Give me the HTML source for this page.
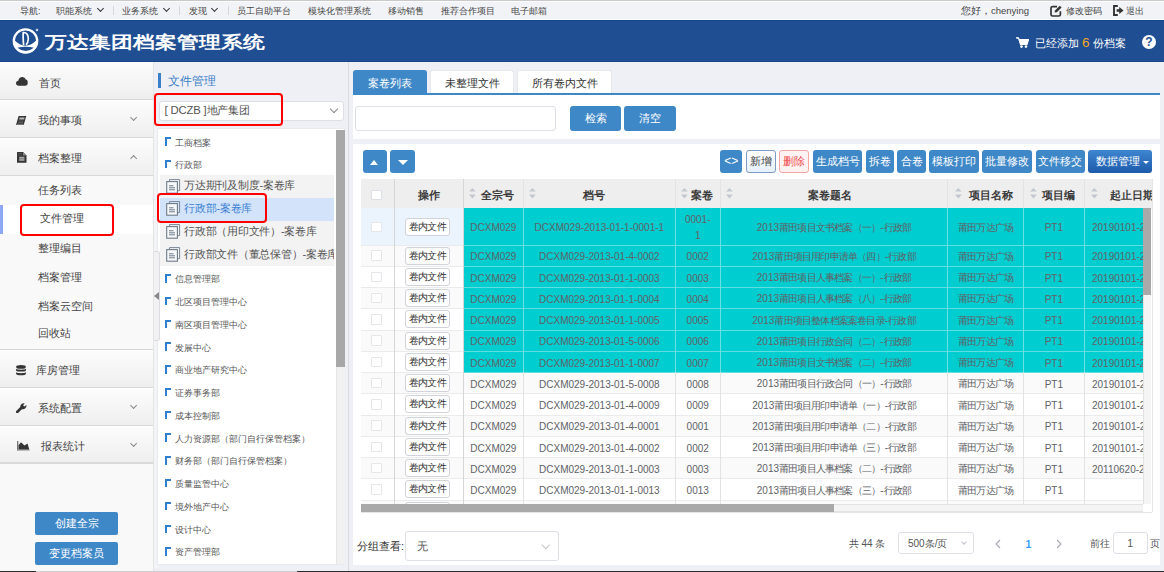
<!DOCTYPE html>
<html><head><meta charset="utf-8">
<style>
*{box-sizing:border-box;margin:0;padding:0}
html,body{width:1164px;height:572px;overflow:hidden;background:#f1f2f6;font-family:"Liberation Sans",sans-serif;color:#333}
.a{position:absolute;white-space:nowrap}
.t{position:absolute;white-space:nowrap;line-height:1}
/* top bar */
#top{position:absolute;left:0;top:0;width:1164px;height:20px;background:#f2f3f7;border-top:1px solid #c9c9c9;box-shadow:inset 0 1px 0 #fbfbfd,inset 0 -1px 0 #fff}
#top .t{font-size:8.8px;color:#444;top:5.6px}
.chev{position:absolute;width:5px;height:5px;border:0 solid #333;border-width:0 1.5px 1.5px 0;transform:rotate(45deg)}
.sep{position:absolute;top:4.8px;width:1.4px;height:9px;background:#d6d7db}
/* header */
#hdr{position:absolute;left:0;top:20px;width:1164px;height:41.8px;background:#1f4e92;border-top:1px solid #1a4788;border-bottom:1.5px solid #1a4788;z-index:2}
/* sidebar */
#side{position:absolute;left:0;top:61px;width:154px;height:511px;background:#f9f9f9;border-right:1px solid #e4e4e4}
.mi{position:absolute;left:0;width:153px;background:linear-gradient(#fcfcfc,#efefef);border-bottom:1px solid #d8d8d8;border-top:1px solid #fff}
.mi .t{font-size:11px;color:#444}
.sub{position:absolute;left:0;width:153px;background:#f9f9f9;border-bottom:1px solid #d8d8d8}
.sub .t{font-size:11px;color:#444;left:38px}
.sbtn{position:absolute;left:35px;width:83px;height:23px;background:#3f88c8;border-radius:2px;color:#fff;font-size:11px;text-align:center;line-height:23px}
.red{position:absolute;border:2.5px solid #ff0000;border-radius:4px}

#tree{position:absolute;left:154px;top:61px;width:195px;height:511px;background:#eef0f5;border-right:1px solid #d9dbe0}
#tree .t{font-size:9px;color:#555}
.gi{position:absolute;left:10.6px;width:6px;height:8.5px;border-left:2.2px solid #2f7fd0;border-top:2.1px solid #2f7fd0}
.doc{position:absolute;left:12.5px}
.l2{font-size:11px !important;color:#555 !important;left:30px}
/*MCSS*/
#main{position:absolute;left:349px;top:61px;width:815px;height:511px;background:#eef0f5}
.tab{position:absolute;top:8.8px;height:24.2px;background:#fff;border:1px solid #e6e8ec;border-bottom:none;border-radius:3px 3px 0 0;font-size:11px;color:#333;text-align:center;line-height:24px}
.bb{position:absolute;height:23px;border-radius:3px;background:#3f88c8;color:#fff;font-size:10.5px;text-align:center;line-height:23px}
.th{position:absolute;top:11.2px;line-height:1;font-size:10.8px;font-weight:bold;color:#3a3a3a}
.srt{position:absolute;width:7px;height:12px}
.cell{position:absolute;text-align:center;font-size:10px;color:#606266;line-height:1}
.vb{position:absolute;top:0;width:1px;background:#e6e6e6}
.ck{position:absolute;width:10.5px;height:10.5px;background:#fff;border:1px solid #dcdfe6;border-radius:1px}
.jb{position:absolute;width:45px;height:18px;background:#fff;border:1px solid #d0d3d9;border-radius:3px;font-size:10px;letter-spacing:-0.8px;text-indent:0.8px;color:#333;text-align:center;line-height:16.5px}
/*/MCSS*/</style></head><body>

<div id="top">
  <div class="t" style="left:20px">导航:</div>
  <div class="t" style="left:56px">职能系统</div><div class="chev" style="left:98px;top:5px"></div>
  <div class="sep" style="left:113px"></div>
  <div class="t" style="left:122px">业务系统</div><div class="chev" style="left:164px;top:5px"></div>
  <div class="sep" style="left:179px"></div>
  <div class="t" style="left:189px">发现</div><div class="chev" style="left:212px;top:5px"></div>
  <div class="sep" style="left:228px"></div>
  <div class="t" style="left:237px">员工自助平台</div>
  <div class="t" style="left:308px">模块化管理系统</div>
  <div class="t" style="left:388px">移动销售</div>
  <div class="t" style="left:441px">推荐合作项目</div>
  <div class="t" style="left:511px">电子邮箱</div>
  <div class="t" style="left:961px;font-size:9.5px;top:5.3px">您好，chenying</div>
  <svg class="a" style="left:1049.5px;top:3.8px" width="12" height="12" viewBox="0 0 12 12"><path d="M7 1.6 H2.6 Q1 1.6 1 3.2 V9.4 Q1 11 2.6 11 H8.8 Q10.4 11 10.4 9.4 V6.2" fill="none" stroke="#333" stroke-width="1.7"/><path d="M4.6 7.6 L5 5.5 L9.8 0.7 L11.6 2.5 L6.8 7.2 Z" fill="#333"/></svg>
  <div class="t" style="left:1065.5px">修改密码</div>
  <svg class="a" style="left:1112.8px;top:4.2px" width="11" height="11" viewBox="0 0 11 11"><path d="M4.8 1 H1 V10 H4.8" fill="none" stroke="#333" stroke-width="1.9"/><path d="M3.6 4.3 H6.2 V2 L10.6 5.5 L6.2 9 V6.7 H3.6 Z" fill="#333"/></svg>
  <div class="t" style="left:1125.7px">退出</div>
</div>

<div id="hdr">
  <svg class="a" style="left:8px;top:5px" width="36" height="32" viewBox="0 0 36 32">
    <path d="M5.8 13.5 Q17.5 26 29.2 13.5 L29.2 15.5 A11.7 11.7 0 0 1 5.8 15.5 Z" fill="#fff"/>
    <path d="M9.2 21.8 Q17.5 19.5 26.3 21.8 Q17.5 28 9.2 21.8 Z" fill="#1f4e92"/>
    <circle cx="17.5" cy="15" r="11.7" fill="none" stroke="#fff" stroke-width="2.3"/>
    <path d="M15.6 19 C15.2 14 15 9 15.2 6.5 C18.8 6.2 20.4 9.5 20.3 13 C20.1 16 19.3 17.8 18.1 19" fill="none" stroke="#fff" stroke-width="1.7"/>
    <circle cx="29" cy="4" r="1.3" fill="#c5d2e6"/>
  </svg>
  <div class="t" style="left:45px;top:11px;font-size:22px;font-weight:bold;color:#fff;letter-spacing:0;transform:scaleY(0.78);transform-origin:0 11px">万达集团档案管理系统</div>
  <svg class="a" style="left:1016px;top:16px" width="13" height="11" viewBox="0 0 13 11">
    <path d="M0 0.8 H2.5 L4.5 7.5 H11 L12.5 2.5 H3.5" fill="#fff" stroke="#fff" stroke-width="1.2" stroke-linejoin="round"/>
    <circle cx="5.5" cy="9.6" r="1.3" fill="#fff"/><circle cx="10" cy="9.6" r="1.3" fill="#fff"/>
  </svg>
  <div class="t" style="left:1035px;top:15px;font-size:11px;color:#fff">已经添加 <span style="color:#f5a623;font-size:13.5px">6</span> 份档案</div>
  <div class="a" style="left:1142px;top:14px;width:14px;height:14px;border-radius:50%;background:#fff;color:#1f4e92;font-size:12px;font-weight:bold;text-align:center;line-height:14px">?</div>
</div>

<div id="side">
<div class="mi" style="top:0.0px;height:39.0px"><svg class="a" style="left:15.8px;top:15.2px" width="12" height="9" viewBox="0 0 12 9"><path d="M2.8 8.7 C1 8.7 0 7.6 0 6.2 C0 4.9 1 3.9 2.3 3.8 C2.6 1.6 4.3 0 6.3 0 C7.9 0 9.2 1 9.7 2.4 C10.9 2.5 11.7 3.5 11.7 4.8 C11.7 5.1 11.7 5.3 11.6 5.5 C11.7 5.7 11.7 6 11.7 6.3 C11.7 7.6 10.7 8.7 9.4 8.7 Z" fill="#353535"/></svg><div class="t" style="left:38.8px;top:15.5px">首页</div></div>
<div class="mi" style="top:39.0px;height:38.0px"><svg class="a" style="left:16.1px;top:14.7px" width="11" height="10" viewBox="0 0 11 10"><path d="M2.6 0 H10.3 L7.7 9.1 H0 Z" fill="#353535"/><path d="M3.6 1.6 H8.6 L8.1 3.4 H3.1 Z" fill="#b5b5b5"/><path d="M2.6 5 H7.4 M2.2 6.5 H7" stroke="#777" stroke-width="0.6"/><path d="M0.6 8.3 H7.5" stroke="#aaa" stroke-width="0.7"/></svg><div class="t" style="left:37.7px;top:14.2px">我的事项</div><div class="chev" style="left:130.8px;top:14.3px;width:5.2px;height:5.2px;border-color:#8a8a8a;border-width:0 1px 1px 0"></div></div>
<div class="mi" style="top:77.0px;height:38.0px"><svg class="a" style="left:16.6px;top:13.2px" width="10" height="11" viewBox="0 0 10 11"><path d="M0 0 H6 L9.5 3.5 V10.8 H0 Z" fill="#353535"/><path d="M6 0 V3.5 H9.5" fill="#888"/><rect x="2.2" y="4.8" width="5.2" height="4" fill="#aaa"/><path d="M2.2 6.8 H7.4" stroke="#555" stroke-width="0.6"/><path d="M1 1.5 H5 M1 3 H5" stroke="#666" stroke-width="0.5"/></svg><div class="t" style="left:37.7px;top:14.0px">档案整理</div><div class="chev" style="left:130.8px;top:17.3px;width:5.2px;height:5.2px;border-color:#8a8a8a;border-width:1px 0 0 1px"></div></div>
<div class="sub" style="top:115.0px;height:174px">
<div class="a" style="left:0;top:28.6px;width:153px;height:29.8px;background:#fff"></div>
<div class="a" style="left:0;top:28.6px;width:2.5px;height:29.8px;background:#8ea8f6"></div>
<div class="t" style="left:38.4px;top:9.0px">任务列表</div>
<div class="t" style="left:40.3px;top:37.3px">文件管理</div>
<div class="t" style="left:38.4px;top:66.5px">整理编目</div>
<div class="t" style="left:38.4px;top:95.5px">档案管理</div>
<div class="t" style="left:38.4px;top:124.5px">档案云空间</div>
<div class="t" style="left:38.4px;top:152.2px">回收站</div>
</div>
<div class="mi" style="top:289.0px;height:38.0px"><svg class="a" style="left:15.8px;top:13.6px" width="10" height="11" viewBox="0 0 10 11"><ellipse cx="5" cy="1.9" rx="4.9" ry="1.9" fill="#353535"/><path d="M0.1 3.6 C0.1 5.2 9.9 5.2 9.9 3.6 V5.4 C9.9 7 0.1 7 0.1 5.4 Z M0.1 7 C0.1 8.6 9.9 8.6 9.9 7 V8.8 C9.9 10.8 0.1 10.8 0.1 8.8 Z" fill="#353535"/></svg><div class="t" style="left:36px;top:14.0px">库房管理</div></div>
<div class="mi" style="top:327.0px;height:38.0px"><svg class="a" style="left:16.3px;top:13.8px" width="11" height="10" viewBox="0 0 11 10"><path d="M1.2 9 L5.2 5" stroke="#353535" stroke-width="2.6" stroke-linecap="round"/><path d="M4.3 4.3 A3.6 3.6 0 0 1 8.8 0.3 L7.1 2.3 L8.3 3.6 L10.4 2 A3.6 3.6 0 0 1 5.9 6.2 Z" fill="#353535"/></svg><div class="t" style="left:37.5px;top:14.2px">系统配置</div><div class="chev" style="left:130.8px;top:14.3px;width:5.2px;height:5.2px;border-color:#8a8a8a;border-width:0 1px 1px 0"></div></div>
<div class="mi" style="border-bottom:2px solid #dadada;top:365.0px;height:38.0px"><svg class="a" style="left:16.5px;top:14.1px" width="13" height="10" viewBox="0 0 13 10"><path d="M0.7 0 V9.5" stroke="#666" stroke-width="1.2"/><path d="M0 9 H12.5" stroke="#999" stroke-width="1.2"/><path d="M1.5 8.4 V4.2 L4 1.2 L7.5 4.6 L10.5 2.4 L12.3 8.4 Z" fill="#353535"/></svg><div class="t" style="left:40.5px;top:13.5px">报表统计</div><div class="chev" style="left:130.8px;top:13.6px;width:5.2px;height:5.2px;border-color:#8a8a8a;border-width:0 1px 1px 0"></div></div>
<div class="sbtn" style="top:450.9px;height:22.9px;line-height:22.9px">创建全宗</div>
<div class="sbtn" style="top:481.3px;height:22.9px;line-height:22.9px">变更档案员</div>
<div class="red" style="left:20.3px;top:142.7px;width:94px;height:32.4px"></div>
</div>
<div id="tree">
<div class="a" style="left:4.0px;top:12.0px;width:2.9px;height:15px;background:#3a7fc8"></div>
<div class="t" style="left:14.0px;top:13.5px;font-size:12.2px;color:#3d7fc6">文件管理</div>
<div class="a" style="left:4.5px;top:39.6px;width:185.5px;height:20.6px;background:#fff;border:1px solid #dcdfe6;border-radius:3px"></div>
<div class="t" style="left:10.5px;top:44.3px;font-size:11.3px;color:#555;letter-spacing:-0.15px">[ DCZB ]地产集团</div>
<div class="chev" style="left:177.3px;top:44.8px;width:6px;height:6px;border-color:#888;border-width:0 1px 1px 0"></div>
<div class="a" style="left:0;top:61.0px;width:4px;height:446px;background:#f3f4f8"></div>
<div class="a" style="left:3.4px;top:66.6px;width:188px;height:437px;background:#fff;border:1px solid #e8eaee"></div>
<div class="a" style="left:182.0px;top:69.0px;width:9px;height:434px;background:#f1f1f1;border-left:1px solid #e6e6e6"></div>
<div class="a" style="left:182.4px;top:69.0px;width:8.6px;height:236.6px;background:#a8a8a8"></div>
<div class="gi" style="left:10.6px;top:76.4px"></div>
<div class="t" style="left:21.3px;top:77.5px">工商档案</div>
<div class="gi" style="left:10.6px;top:98.5px"></div>
<div class="t" style="left:21.3px;top:99.6px">行政部</div>
<div class="a" style="left:6.0px;top:114.2px;width:174px;height:90.4px;background:#f3f3f3;overflow:hidden">
<div class="a" style="left:0;top:22.5px;width:174px;height:23.1px;background:#d3e4fa"></div>
<svg class="a" style="left:6.4px;top:3.4px" width="15" height="15" viewBox="0 0 15 15"><path d="M3.5 2.3 V0.6 H13.6 V11.6 H11.6" fill="none" stroke="#7a8794" stroke-width="1"/><rect x="0.7" y="2.6" width="10.7" height="11.6" fill="#f6f8fa" stroke="#6f7c89" stroke-width="1.1"/><path d="M3 6.8 H7.5 M3 8.8 H9 M3 10.8 H9" stroke="#6f7c89" stroke-width="1"/></svg>
<div class="t" style="left:24.2px;top:5.0px;font-size:11px;letter-spacing:-0.25px;color:#555">万达期刊及制度-案卷库</div>
<svg class="a" style="left:6.4px;top:26.2px" width="15" height="15" viewBox="0 0 15 15"><path d="M3.5 2.3 V0.6 H13.6 V11.6 H11.6" fill="none" stroke="#7a8794" stroke-width="1"/><rect x="0.7" y="2.6" width="10.7" height="11.6" fill="#f6f8fa" stroke="#6f7c89" stroke-width="1.1"/><path d="M3 6.8 H7.5 M3 8.8 H9 M3 10.8 H9" stroke="#6f7c89" stroke-width="1"/></svg>
<div class="t" style="left:24.2px;top:27.8px;font-size:11px;letter-spacing:-0.25px;color:#555;color:#3d80d2">行政部-案卷库</div>
<svg class="a" style="left:6.4px;top:49.1px" width="15" height="15" viewBox="0 0 15 15"><path d="M3.5 2.3 V0.6 H13.6 V11.6 H11.6" fill="none" stroke="#7a8794" stroke-width="1"/><rect x="0.7" y="2.6" width="10.7" height="11.6" fill="#f6f8fa" stroke="#6f7c89" stroke-width="1.1"/><path d="M3 6.8 H7.5 M3 8.8 H9 M3 10.8 H9" stroke="#6f7c89" stroke-width="1"/></svg>
<div class="t" style="left:24.2px;top:50.7px;font-size:11px;letter-spacing:-0.25px;color:#555">行政部（用印文件）-案卷库</div>
<svg class="a" style="left:6.4px;top:71.9px" width="15" height="15" viewBox="0 0 15 15"><path d="M3.5 2.3 V0.6 H13.6 V11.6 H11.6" fill="none" stroke="#7a8794" stroke-width="1"/><rect x="0.7" y="2.6" width="10.7" height="11.6" fill="#f6f8fa" stroke="#6f7c89" stroke-width="1.1"/><path d="M3 6.8 H7.5 M3 8.8 H9 M3 10.8 H9" stroke="#6f7c89" stroke-width="1"/></svg>
<div class="t" style="left:24.2px;top:73.5px;font-size:11px;letter-spacing:-0.25px;color:#555">行政部文件（董总保管）-案卷库</div>
</div>
<div class="gi" style="left:10.6px;top:213.2px"></div>
<div class="t" style="left:21.3px;top:214.3px">信息管理部</div>
<div class="gi" style="left:10.6px;top:235.9px"></div>
<div class="t" style="left:21.3px;top:237.1px">北区项目管理中心</div>
<div class="gi" style="left:10.6px;top:258.7px"></div>
<div class="t" style="left:21.3px;top:259.8px">南区项目管理中心</div>
<div class="gi" style="left:10.6px;top:281.4px"></div>
<div class="t" style="left:21.3px;top:282.6px">发展中心</div>
<div class="gi" style="left:10.6px;top:304.2px"></div>
<div class="t" style="left:21.3px;top:305.3px">商业地产研究中心</div>
<div class="gi" style="left:10.6px;top:326.9px"></div>
<div class="t" style="left:21.3px;top:328.1px">证券事务部</div>
<div class="gi" style="left:10.6px;top:349.7px"></div>
<div class="t" style="left:21.3px;top:350.8px">成本控制部</div>
<div class="gi" style="left:10.6px;top:372.4px"></div>
<div class="t" style="left:21.3px;top:373.6px">人力资源部（部门自行保管档案）</div>
<div class="gi" style="left:10.6px;top:395.2px"></div>
<div class="t" style="left:21.3px;top:396.3px">财务部（部门自行保管档案）</div>
<div class="gi" style="left:10.6px;top:417.9px"></div>
<div class="t" style="left:21.3px;top:419.1px">质量监管中心</div>
<div class="gi" style="left:10.6px;top:440.7px"></div>
<div class="t" style="left:21.3px;top:441.8px">境外地产中心</div>
<div class="gi" style="left:10.6px;top:463.5px"></div>
<div class="t" style="left:21.3px;top:464.5px">设计中心</div>
<div class="gi" style="left:10.6px;top:486.2px"></div>
<div class="t" style="left:21.3px;top:487.3px">资产管理部</div>
<div class="red" style="left:0.4px;top:31.5px;width:129.1px;height:33.3px"></div>
<div class="red" style="left:3.0px;top:132.4px;width:109.6px;height:30px"></div>
</div>
<div class="a" style="left:153.5px;top:251.2px;width:6.5px;height:90px;background:#f1f1f3;border:1px solid #dcdde2;border-left:none;border-radius:0 3px 3px 0"></div>
<div class="a" style="left:154.4px;top:292px;width:0;height:0;border-top:4.6px solid transparent;border-bottom:4.6px solid transparent;border-right:5px solid #888"></div>
<div id="main">
<div class="tab" style="left:4.4px;width:73.7px;background:#3f88c8;border-color:#3f88c8;color:#fff">案卷列表</div>
<div class="tab" style="left:81.2px;width:84.3px">未整理文件</div>
<div class="tab" style="left:168.3px;width:95.1px">所有卷内文件</div>
<div class="a" style="left:4.4px;top:32.3px;width:807px;height:1.7px;background:#3f88c8"></div>
<div class="a" style="left:4.0px;top:34.0px;width:807px;height:44px;background:#fff"></div>
<div class="a" style="left:6.0px;top:45.0px;width:201px;height:25px;background:#fff;border:1px solid #dcdfe6;border-radius:3px"></div>
<div class="bb" style="left:221.0px;top:44.5px;width:51px;height:25.5px;line-height:25.5px;font-size:11px">检索</div>
<div class="bb" style="left:275.4px;top:44.5px;width:51.6px;height:25.5px;line-height:25.5px;font-size:11px">清空</div>
<div class="a" style="left:4.0px;top:83.0px;width:807px;height:421px;background:#fff"></div>
<div class="bb" style="left:13.7px;top:89.0px;width:24.5px;height:22.8px"></div>
<div class="a" style="left:21.0px;top:99.0px;width:0;height:0;border-left:4.7px solid transparent;border-right:4.7px solid transparent;border-bottom:5.2px solid #fff"></div>
<div class="bb" style="left:41.4px;top:89.0px;width:24.7px;height:22.8px"></div>
<div class="a" style="left:48.6px;top:99.0px;width:0;height:0;border-left:5px solid transparent;border-right:5px solid transparent;border-top:5.2px solid #fff"></div>
<div class="bb" style="left:370.8px;top:89.0px;width:22.7px;height:22.5px"><span style="font-size:12px">&lt;&gt;</span></div>
<div class="bb" style="left:396.7px;top:89.0px;width:30.2px;height:22.5px;background:linear-gradient(#fff,#e6f0fb);border:1px solid #7d9cc4;color:#444;line-height:21px">新增</div>
<div class="bb" style="left:430.0px;top:89.0px;width:30.4px;height:22.5px;background:#fff2f2;border:1px solid #f6a5a5;color:#f04848;line-height:21px">删除</div>
<div class="bb" style="left:463.8px;top:89.0px;width:49.7px;height:22.5px">生成档号</div>
<div class="bb" style="left:517.0px;top:89.0px;width:27.7px;height:22.5px">拆卷</div>
<div class="bb" style="left:548.3px;top:89.0px;width:28.5px;height:22.5px">合卷</div>
<div class="bb" style="left:580.4px;top:89.0px;width:49.3px;height:22.5px">模板打印</div>
<div class="bb" style="left:633.3px;top:89.0px;width:49.9px;height:22.5px">批量修改</div>
<div class="bb" style="left:686.7px;top:89.0px;width:49.3px;height:22.5px">文件移交</div>
<div class="bb" style="left:739.3px;top:89.0px;width:64px;height:22.5px;background:linear-gradient(#3e86cf,#1c5aab);text-align:left;padding-left:8px;font-size:11px">数据管理</div>
<div class="a" style="left:794.0px;top:99.5px;width:0;height:0;border-left:3.2px solid transparent;border-right:3.2px solid transparent;border-top:3.5px solid #fff"></div>
<div class="a" style="left:12.2px;top:118.2px;width:790.4px;height:333px;overflow:hidden;background:#fff">
<div class="a" style="left:0;top:0;width:790.4px;height:29.4px;background:#eeeeee"></div>
<div class="a" style="left:0;top:29.20px;width:782.3px;height:36.70px;background:#ebf3fd"></div>
<div class="a" style="left:102.1px;top:29.20px;width:680.2px;height:36.70px;background:#00cdd0"></div>
<div class="a" style="left:0;top:65.90px;width:782.3px;height:21.24px;background:#fafafa"></div>
<div class="a" style="left:102.1px;top:65.90px;width:680.2px;height:21.24px;background:#00cdd0"></div>
<div class="a" style="left:0;top:87.14px;width:782.3px;height:21.24px;background:#fff"></div>
<div class="a" style="left:102.1px;top:87.14px;width:680.2px;height:21.24px;background:#00cdd0"></div>
<div class="a" style="left:0;top:108.38px;width:782.3px;height:21.24px;background:#fafafa"></div>
<div class="a" style="left:102.1px;top:108.38px;width:680.2px;height:21.24px;background:#00cdd0"></div>
<div class="a" style="left:0;top:129.62px;width:782.3px;height:21.24px;background:#fff"></div>
<div class="a" style="left:102.1px;top:129.62px;width:680.2px;height:21.24px;background:#00cdd0"></div>
<div class="a" style="left:0;top:150.86px;width:782.3px;height:21.24px;background:#fafafa"></div>
<div class="a" style="left:102.1px;top:150.86px;width:680.2px;height:21.24px;background:#00cdd0"></div>
<div class="a" style="left:0;top:172.10px;width:782.3px;height:21.24px;background:#fff"></div>
<div class="a" style="left:102.1px;top:172.10px;width:680.2px;height:21.24px;background:#00cdd0"></div>
<div class="a" style="left:0;top:193.34px;width:782.3px;height:21.24px;background:#fafafa"></div>
<div class="a" style="left:0;top:214.58px;width:782.3px;height:21.24px;background:#fff"></div>
<div class="a" style="left:0;top:235.82px;width:782.3px;height:21.24px;background:#fafafa"></div>
<div class="a" style="left:0;top:257.06px;width:782.3px;height:21.24px;background:#fff"></div>
<div class="a" style="left:0;top:278.30px;width:782.3px;height:21.24px;background:#fafafa"></div>
<div class="a" style="left:0;top:299.54px;width:782.3px;height:21.24px;background:#fff"></div>
<div class="a" style="left:0;top:320.78px;width:782.3px;height:21.24px;background:#fafafa"></div>
<div class="a" style="left:0;top:65.50px;width:782.3px;height:1px;background:#ebebeb"></div>
<div class="a" style="left:102.1px;top:65.50px;width:680.2px;height:1px;background:#5fdde0"></div>
<div class="a" style="left:0;top:86.74px;width:782.3px;height:1px;background:#ebebeb"></div>
<div class="a" style="left:102.1px;top:86.74px;width:680.2px;height:1px;background:#5fdde0"></div>
<div class="a" style="left:0;top:107.98px;width:782.3px;height:1px;background:#ebebeb"></div>
<div class="a" style="left:102.1px;top:107.98px;width:680.2px;height:1px;background:#5fdde0"></div>
<div class="a" style="left:0;top:129.22px;width:782.3px;height:1px;background:#ebebeb"></div>
<div class="a" style="left:102.1px;top:129.22px;width:680.2px;height:1px;background:#5fdde0"></div>
<div class="a" style="left:0;top:150.46px;width:782.3px;height:1px;background:#ebebeb"></div>
<div class="a" style="left:102.1px;top:150.46px;width:680.2px;height:1px;background:#5fdde0"></div>
<div class="a" style="left:0;top:171.70px;width:782.3px;height:1px;background:#ebebeb"></div>
<div class="a" style="left:102.1px;top:171.70px;width:680.2px;height:1px;background:#5fdde0"></div>
<div class="a" style="left:0;top:192.94px;width:782.3px;height:1px;background:#ebebeb"></div>
<div class="a" style="left:102.1px;top:192.94px;width:680.2px;height:1px;background:#5fdde0"></div>
<div class="a" style="left:0;top:214.18px;width:782.3px;height:1px;background:#ebebeb"></div>
<div class="a" style="left:0;top:235.42px;width:782.3px;height:1px;background:#ebebeb"></div>
<div class="a" style="left:0;top:256.66px;width:782.3px;height:1px;background:#ebebeb"></div>
<div class="a" style="left:0;top:277.90px;width:782.3px;height:1px;background:#ebebeb"></div>
<div class="a" style="left:0;top:299.14px;width:782.3px;height:1px;background:#ebebeb"></div>
<div class="a" style="left:0;top:320.38px;width:782.3px;height:1px;background:#ebebeb"></div>
<div class="a" style="left:0;top:341.62px;width:782.3px;height:1px;background:#ebebeb"></div>
<div class="vb" style="left:32.8px;height:324.4px;width:1.5px;background:#d6d6d6"></div>
<div class="vb" style="left:101.6px;height:324.4px;width:1.5px;background:#d6d6d6"></div>
<div class="vb" style="left:161.8px;height:324.4px;width:1px;background:#e3e3e3"></div>
<div class="vb" style="left:313.5px;height:324.4px;width:1px;background:#e3e3e3"></div>
<div class="vb" style="left:358.6px;height:324.4px;width:1px;background:#e3e3e3"></div>
<div class="vb" style="left:586.0px;height:324.4px;width:1px;background:#e3e3e3"></div>
<div class="vb" style="left:661.8px;height:324.4px;width:1px;background:#e3e3e3"></div>
<div class="vb" style="left:722.5px;height:324.4px;width:1px;background:#e3e3e3"></div>
<div class="vb" style="left:161.8px;top:29.2px;height:164.1px;background:#6adfe2"></div>
<div class="vb" style="left:313.5px;top:29.2px;height:164.1px;background:#6adfe2"></div>
<div class="vb" style="left:358.6px;top:29.2px;height:164.1px;background:#6adfe2"></div>
<div class="vb" style="left:586.0px;top:29.2px;height:164.1px;background:#6adfe2"></div>
<div class="vb" style="left:661.8px;top:29.2px;height:164.1px;background:#6adfe2"></div>
<div class="vb" style="left:722.5px;top:29.2px;height:164.1px;background:#6adfe2"></div>
<div class="ck" style="left:10.3px;top:10.4px"></div>
<div class="th" style="left:57.3px">操作</div>
<svg class="a" style="left:107.8px;top:9.2px" width="7" height="11" viewBox="0 0 7 11"><path d="M0 3.6 L3.4 0 L6.8 3.6 Z M0 6.6 L6.8 6.6 L3.4 10.5 Z" fill="#c3c7ce"/></svg>
<div class="th" style="left:120.2px">全宗号</div>
<svg class="a" style="left:168.0px;top:9.2px" width="7" height="11" viewBox="0 0 7 11"><path d="M0 3.6 L3.4 0 L6.8 3.6 Z M0 6.6 L6.8 6.6 L3.4 10.5 Z" fill="#c3c7ce"/></svg>
<div class="th" style="left:222.1px">档号</div>
<svg class="a" style="left:319.8px;top:9.2px" width="7" height="11" viewBox="0 0 7 11"><path d="M0 3.6 L3.4 0 L6.8 3.6 Z M0 6.6 L6.8 6.6 L3.4 10.5 Z" fill="#c3c7ce"/></svg>
<div class="th" style="left:329.8px">案卷</div>
<svg class="a" style="left:364.8px;top:9.2px" width="7" height="11" viewBox="0 0 7 11"><path d="M0 3.6 L3.4 0 L6.8 3.6 Z M0 6.6 L6.8 6.6 L3.4 10.5 Z" fill="#c3c7ce"/></svg>
<div class="th" style="left:446.6px">案卷题名</div>
<svg class="a" style="left:593.5px;top:9.2px" width="7" height="11" viewBox="0 0 7 11"><path d="M0 3.6 L3.4 0 L6.8 3.6 Z M0 6.6 L6.8 6.6 L3.4 10.5 Z" fill="#c3c7ce"/></svg>
<div class="th" style="left:607.5px">项目名称</div>
<svg class="a" style="left:668.8px;top:9.2px" width="7" height="11" viewBox="0 0 7 11"><path d="M0 3.6 L3.4 0 L6.8 3.6 Z M0 6.6 L6.8 6.6 L3.4 10.5 Z" fill="#c3c7ce"/></svg>
<div class="th" style="left:680.8px">项目编</div>
<svg class="a" style="left:729.8px;top:9.2px" width="7" height="11" viewBox="0 0 7 11"><path d="M0 3.6 L3.4 0 L6.8 3.6 Z M0 6.6 L6.8 6.6 L3.4 10.5 Z" fill="#c3c7ce"/></svg>
<div class="th" style="left:749.1px">起止日期</div>
<div class="ck" style="left:10.3px;top:42.4px;border-color:#e4e6ea"></div>
<div class="jb" style="left:43.4px;top:38.6px">卷内文件</div>
<div class="cell" style="left:102.1px;width:60.2px;top:44.2px">DCXM029</div>
<div class="cell" style="left:162.3px;width:151.7px;top:44.2px">DCXM029-2013-01-1-0001-1</div>
<div class="cell" style="left:314.0px;width:45px;top:32.8px;line-height:16.5px">0001-<br>1</div>
<div class="cell" style="left:359.1px;width:227.4px;top:43.8px;font-size:10px">2013<span style="letter-spacing:-0.8px">莆田项目文书档案（一）<span style="letter-spacing:0">-</span>行政部</span></div>
<div class="cell" style="left:586.5px;width:75.8px;top:43.8px;font-size:10px;letter-spacing:-0.8px">莆田万达广场</div>
<div class="cell" style="left:662.3px;width:60.7px;top:44.2px">PT1</div>
<div class="cell" style="left:730.8px;top:44.2px;text-align:left">20190101-2</div>
<div class="ck" style="left:10.3px;top:71.3px;border-color:#e4e6ea"></div>
<div class="jb" style="left:43.4px;top:67.5px">卷内文件</div>
<div class="cell" style="left:102.1px;width:60.2px;top:73.2px">DCXM029</div>
<div class="cell" style="left:162.3px;width:151.7px;top:73.2px">DCXM029-2013-01-4-0002</div>
<div class="cell" style="left:314.0px;width:45.1px;top:73.2px">0002</div>
<div class="cell" style="left:359.1px;width:227.4px;top:72.7px;font-size:10px">2013<span style="letter-spacing:-0.8px">莆田项目用印申请单（四）<span style="letter-spacing:0">-</span>行政部</span></div>
<div class="cell" style="left:586.5px;width:75.8px;top:72.7px;font-size:10px;letter-spacing:-0.8px">莆田万达广场</div>
<div class="cell" style="left:662.3px;width:60.7px;top:73.2px">PT1</div>
<div class="cell" style="left:730.8px;top:73.2px;text-align:left">20190101-2</div>
<div class="ck" style="left:10.3px;top:92.6px;border-color:#e4e6ea"></div>
<div class="jb" style="left:43.4px;top:88.8px">卷内文件</div>
<div class="cell" style="left:102.1px;width:60.2px;top:94.5px">DCXM029</div>
<div class="cell" style="left:162.3px;width:151.7px;top:94.5px">DCXM029-2013-01-1-0003</div>
<div class="cell" style="left:314.0px;width:45.1px;top:94.5px">0003</div>
<div class="cell" style="left:359.1px;width:227.4px;top:94.0px;font-size:10px">2013<span style="letter-spacing:-0.8px">莆田项目人事档案（一）<span style="letter-spacing:0">-</span>行政部</span></div>
<div class="cell" style="left:586.5px;width:75.8px;top:94.0px;font-size:10px;letter-spacing:-0.8px">莆田万达广场</div>
<div class="cell" style="left:662.3px;width:60.7px;top:94.5px">PT1</div>
<div class="cell" style="left:730.8px;top:94.5px;text-align:left">20190101-2</div>
<div class="ck" style="left:10.3px;top:113.8px;border-color:#e4e6ea"></div>
<div class="jb" style="left:43.4px;top:110.0px">卷内文件</div>
<div class="cell" style="left:102.1px;width:60.2px;top:115.7px">DCXM029</div>
<div class="cell" style="left:162.3px;width:151.7px;top:115.7px">DCXM029-2013-01-1-0004</div>
<div class="cell" style="left:314.0px;width:45.1px;top:115.7px">0004</div>
<div class="cell" style="left:359.1px;width:227.4px;top:115.2px;font-size:10px">2013<span style="letter-spacing:-0.8px">莆田项目人事档案（八）<span style="letter-spacing:0">-</span>行政部</span></div>
<div class="cell" style="left:586.5px;width:75.8px;top:115.2px;font-size:10px;letter-spacing:-0.8px">莆田万达广场</div>
<div class="cell" style="left:662.3px;width:60.7px;top:115.7px">PT1</div>
<div class="cell" style="left:730.8px;top:115.7px;text-align:left">20190101-2</div>
<div class="ck" style="left:10.3px;top:135.0px;border-color:#e4e6ea"></div>
<div class="jb" style="left:43.4px;top:131.2px">卷内文件</div>
<div class="cell" style="left:102.1px;width:60.2px;top:136.9px">DCXM029</div>
<div class="cell" style="left:162.3px;width:151.7px;top:136.9px">DCXM029-2013-01-1-0005</div>
<div class="cell" style="left:314.0px;width:45.1px;top:136.9px">0005</div>
<div class="cell" style="left:359.1px;width:227.4px;top:136.4px;font-size:10px">2013<span style="letter-spacing:-0.8px">莆田项目整体档案案卷目录<span style="letter-spacing:0">-</span>行政部</span></div>
<div class="cell" style="left:586.5px;width:75.8px;top:136.4px;font-size:10px;letter-spacing:-0.8px">莆田万达广场</div>
<div class="cell" style="left:662.3px;width:60.7px;top:136.9px">PT1</div>
<div class="cell" style="left:730.8px;top:136.9px;text-align:left">20190101-2</div>
<div class="ck" style="left:10.3px;top:156.3px;border-color:#e4e6ea"></div>
<div class="jb" style="left:43.4px;top:152.5px">卷内文件</div>
<div class="cell" style="left:102.1px;width:60.2px;top:158.2px">DCXM029</div>
<div class="cell" style="left:162.3px;width:151.7px;top:158.2px">DCXM029-2013-01-5-0006</div>
<div class="cell" style="left:314.0px;width:45.1px;top:158.2px">0006</div>
<div class="cell" style="left:359.1px;width:227.4px;top:157.7px;font-size:10px">2013<span style="letter-spacing:-0.8px">莆田项目行政合同（二）<span style="letter-spacing:0">-</span>行政部</span></div>
<div class="cell" style="left:586.5px;width:75.8px;top:157.7px;font-size:10px;letter-spacing:-0.8px">莆田万达广场</div>
<div class="cell" style="left:662.3px;width:60.7px;top:158.2px">PT1</div>
<div class="cell" style="left:730.8px;top:158.2px;text-align:left">20190101-2</div>
<div class="ck" style="left:10.3px;top:177.5px;border-color:#e4e6ea"></div>
<div class="jb" style="left:43.4px;top:173.7px">卷内文件</div>
<div class="cell" style="left:102.1px;width:60.2px;top:179.4px">DCXM029</div>
<div class="cell" style="left:162.3px;width:151.7px;top:179.4px">DCXM029-2013-01-1-0007</div>
<div class="cell" style="left:314.0px;width:45.1px;top:179.4px">0007</div>
<div class="cell" style="left:359.1px;width:227.4px;top:178.9px;font-size:10px">2013<span style="letter-spacing:-0.8px">莆田项目文书档案（二）<span style="letter-spacing:0">-</span>行政部</span></div>
<div class="cell" style="left:586.5px;width:75.8px;top:178.9px;font-size:10px;letter-spacing:-0.8px">莆田万达广场</div>
<div class="cell" style="left:662.3px;width:60.7px;top:179.4px">PT1</div>
<div class="cell" style="left:730.8px;top:179.4px;text-align:left">20190101-2</div>
<div class="ck" style="left:10.3px;top:198.8px;border-color:#e4e6ea"></div>
<div class="jb" style="left:43.4px;top:195.0px">卷内文件</div>
<div class="cell" style="left:102.1px;width:60.2px;top:200.7px">DCXM029</div>
<div class="cell" style="left:162.3px;width:151.7px;top:200.7px">DCXM029-2013-01-5-0008</div>
<div class="cell" style="left:314.0px;width:45.1px;top:200.7px">0008</div>
<div class="cell" style="left:359.1px;width:227.4px;top:200.2px;font-size:10px">2013<span style="letter-spacing:-0.8px">莆田项目行政合同（一）<span style="letter-spacing:0">-</span>行政部</span></div>
<div class="cell" style="left:586.5px;width:75.8px;top:200.2px;font-size:10px;letter-spacing:-0.8px">莆田万达广场</div>
<div class="cell" style="left:662.3px;width:60.7px;top:200.7px">PT1</div>
<div class="cell" style="left:730.8px;top:200.7px;text-align:left">20190101-2</div>
<div class="ck" style="left:10.3px;top:220.0px;border-color:#e4e6ea"></div>
<div class="jb" style="left:43.4px;top:216.2px">卷内文件</div>
<div class="cell" style="left:102.1px;width:60.2px;top:221.9px">DCXM029</div>
<div class="cell" style="left:162.3px;width:151.7px;top:221.9px">DCXM029-2013-01-4-0009</div>
<div class="cell" style="left:314.0px;width:45.1px;top:221.9px">0009</div>
<div class="cell" style="left:359.1px;width:227.4px;top:221.4px;font-size:10px">2013<span style="letter-spacing:-0.8px">莆田项目用印申请单（一）<span style="letter-spacing:0">-</span>行政部</span></div>
<div class="cell" style="left:586.5px;width:75.8px;top:221.4px;font-size:10px;letter-spacing:-0.8px">莆田万达广场</div>
<div class="cell" style="left:662.3px;width:60.7px;top:221.9px">PT1</div>
<div class="cell" style="left:730.8px;top:221.9px;text-align:left">20190101-2</div>
<div class="ck" style="left:10.3px;top:241.2px;border-color:#e4e6ea"></div>
<div class="jb" style="left:43.4px;top:237.4px">卷内文件</div>
<div class="cell" style="left:102.1px;width:60.2px;top:243.1px">DCXM029</div>
<div class="cell" style="left:162.3px;width:151.7px;top:243.1px">DCXM029-2013-01-4-0001</div>
<div class="cell" style="left:314.0px;width:45.1px;top:243.1px">0001</div>
<div class="cell" style="left:359.1px;width:227.4px;top:242.6px;font-size:10px">2013<span style="letter-spacing:-0.8px">莆田项目用印申请单（二）<span style="letter-spacing:0">-</span>行政部</span></div>
<div class="cell" style="left:586.5px;width:75.8px;top:242.6px;font-size:10px;letter-spacing:-0.8px">莆田万达广场</div>
<div class="cell" style="left:662.3px;width:60.7px;top:243.1px">PT1</div>
<div class="cell" style="left:730.8px;top:243.1px;text-align:left">20190101-2</div>
<div class="ck" style="left:10.3px;top:262.5px;border-color:#e4e6ea"></div>
<div class="jb" style="left:43.4px;top:258.7px">卷内文件</div>
<div class="cell" style="left:102.1px;width:60.2px;top:264.4px">DCXM029</div>
<div class="cell" style="left:162.3px;width:151.7px;top:264.4px">DCXM029-2013-01-4-0002</div>
<div class="cell" style="left:314.0px;width:45.1px;top:264.4px">0002</div>
<div class="cell" style="left:359.1px;width:227.4px;top:263.9px;font-size:10px">2013<span style="letter-spacing:-0.8px">莆田项目用印申请单（三）<span style="letter-spacing:0">-</span>行政部</span></div>
<div class="cell" style="left:586.5px;width:75.8px;top:263.9px;font-size:10px;letter-spacing:-0.8px">莆田万达广场</div>
<div class="cell" style="left:662.3px;width:60.7px;top:264.4px">PT1</div>
<div class="cell" style="left:730.8px;top:264.4px;text-align:left">20190101-2</div>
<div class="ck" style="left:10.3px;top:283.7px;border-color:#e4e6ea"></div>
<div class="jb" style="left:43.4px;top:279.9px">卷内文件</div>
<div class="cell" style="left:102.1px;width:60.2px;top:285.6px">DCXM029</div>
<div class="cell" style="left:162.3px;width:151.7px;top:285.6px">DCXM029-2013-01-1-0003</div>
<div class="cell" style="left:314.0px;width:45.1px;top:285.6px">0003</div>
<div class="cell" style="left:359.1px;width:227.4px;top:285.1px;font-size:10px">2013<span style="letter-spacing:-0.8px">莆田项目人事档案（二）<span style="letter-spacing:0">-</span>行政部</span></div>
<div class="cell" style="left:586.5px;width:75.8px;top:285.1px;font-size:10px;letter-spacing:-0.8px">莆田万达广场</div>
<div class="cell" style="left:662.3px;width:60.7px;top:285.6px">PT1</div>
<div class="cell" style="left:730.8px;top:285.6px;text-align:left">20110620-2</div>
<div class="ck" style="left:10.3px;top:305.0px;border-color:#e4e6ea"></div>
<div class="jb" style="left:43.4px;top:301.2px">卷内文件</div>
<div class="cell" style="left:102.1px;width:60.2px;top:306.9px">DCXM029</div>
<div class="cell" style="left:162.3px;width:151.7px;top:306.9px">DCXM029-2013-01-1-0013</div>
<div class="cell" style="left:314.0px;width:45.1px;top:306.9px">0013</div>
<div class="cell" style="left:359.1px;width:227.4px;top:306.4px;font-size:10px">2013<span style="letter-spacing:-0.8px">莆田项目人事档案（三）<span style="letter-spacing:0">-</span>行政部</span></div>
<div class="cell" style="left:586.5px;width:75.8px;top:306.4px;font-size:10px;letter-spacing:-0.8px">莆田万达广场</div>
<div class="cell" style="left:662.3px;width:60.7px;top:306.9px">PT1</div>
<div class="ck" style="left:10.3px;top:326.2px;border-color:#e4e6ea"></div>
<div class="jb" style="left:43.4px;top:322.4px">卷内文件</div>
<div class="a" style="left:782.1px;top:29.4px;width:8.2px;height:295.0px;background:#f4f4f4;border-left:1px solid #e2e2e2"></div>
<div class="a" style="left:782.3px;top:29.0px;width:8px;height:86.6px;background:#a9a9a9"></div>
<div class="a" style="left:0;top:324.4px;width:782px;height:8.6px;background:#f4f4f4;border-top:1px solid #e2e2e2;border-bottom:1px solid #e2e2e2"></div>
<div class="a" style="left:0;top:324.4px;width:472.6px;height:8.6px;background:#a9a9a9"></div>
</div>
<div class="a" style="left:802.5px;top:118.2px;width:1px;height:333px;background:#e6e6e6"></div>
<div class="a" style="left:12.2px;top:451.0px;width:791px;height:1px;background:#e6e6e6"></div>
<div class="t" style="left:8.0px;top:480.0px;font-size:11px;color:#333">分组查看:</div>
<div class="a" style="left:56.4px;top:470.0px;width:154px;height:29.5px;border:1px solid #dcdfe6;border-radius:3px;background:#fff"></div>
<div class="t" style="left:68.0px;top:480.0px;font-size:11px;color:#555">无</div>
<div class="chev" style="left:194.0px;top:480.5px;width:5.5px;height:5.5px;border-color:#bbb;border-width:0 1px 1px 0"></div>
<div class="t" style="left:499.7px;top:477.5px;font-size:10px;color:#555">共 44 条</div>
<div class="a" style="left:549.0px;top:471.3px;width:75.5px;height:21.3px;border:1px solid #dcdfe6;border-radius:3px;background:#fff"></div>
<div class="t" style="left:559.0px;top:477.5px;font-size:10px;color:#555">500条/页</div>
<div class="chev" style="left:613.0px;top:479.0px;width:4px;height:4px;border-color:#c0c4cc;border-width:0 1px 1px 0"></div>
<svg class="a" style="left:645.5px;top:478.0px" width="6" height="10" viewBox="0 0 6 10"><path d="M5 1 L1 5 L5 9" fill="none" stroke="#a8abb2" stroke-width="1.1"/></svg>
<div class="t" style="left:676.5px;top:477.5px;font-size:10.5px;font-weight:bold;color:#409eff">1</div>
<svg class="a" style="left:707.0px;top:478.0px" width="6" height="10" viewBox="0 0 6 10"><path d="M1 1 L5 5 L1 9" fill="none" stroke="#a8abb2" stroke-width="1.1"/></svg>
<div class="t" style="left:740.7px;top:477.5px;font-size:10px;color:#555">前往</div>
<div class="a" style="left:763.6px;top:471.3px;width:35px;height:21.3px;border:1px solid #dcdfe6;border-radius:3px;background:#fff;text-align:center;font-size:10.5px;line-height:20px;color:#555">1</div>
<div class="t" style="left:801.0px;top:477.5px;font-size:10px;color:#555">页</div>
</div>
<div class="a" style="left:0;top:571px;width:36px;height:1px;background:#2b2b2b"></div><div class="a" style="left:36px;top:571px;width:261px;height:1px;background:#cfcfcf"></div><div class="a" style="left:297px;top:571px;width:867px;height:1px;background:#2b2b2b"></div><!--/main-->
</body></html>
